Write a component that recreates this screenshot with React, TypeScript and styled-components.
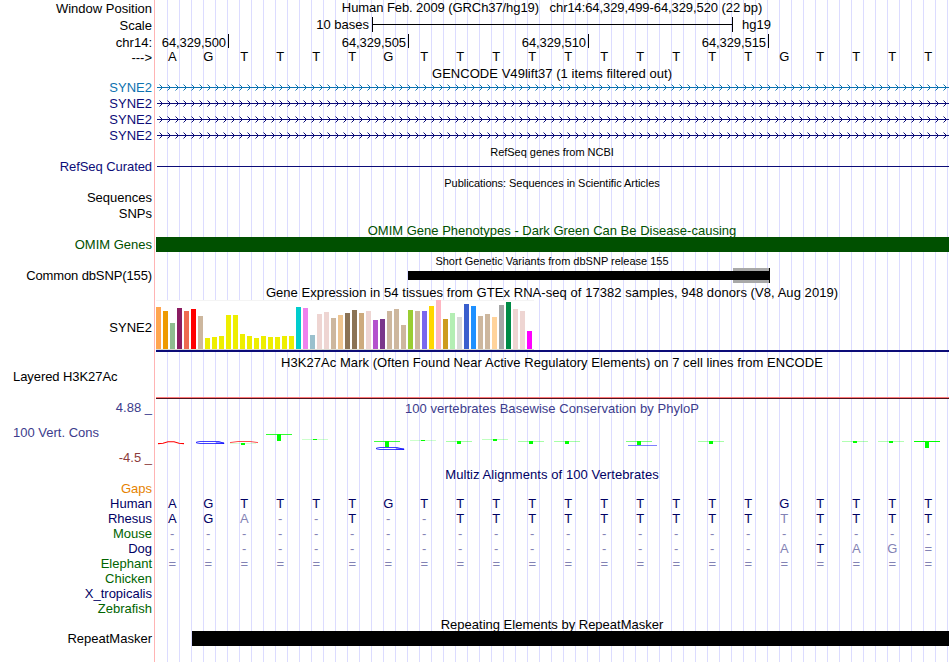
import styled, { createGlobalStyle } from 'styled-components';

const ink = {
  black: '#000000',
  navy: '#0c0c78',
  blue: '#0c72b0',
  green: '#005000',
  species: '#006400',
  align: '#000064',
  cons: '#3c3c8c',
  consLow: '#8c3c3c',
  gaps: '#e68200',
};

const HUMAN = 'AGTTTTGTTTTTTTTTTGTTTT';

// lower case marks a base that differs from the reference
const ALIGNMENTS: { name: string; tint: string; bases: string }[] = [
  { name: 'Gaps', tint: ink.gaps, bases: '' },
  { name: 'Human', tint: ink.align, bases: HUMAN },
  { name: 'Rhesus', tint: ink.align, bases: 'AGa--T--TTTTTTTTTtTTTT' },
  { name: 'Mouse', tint: ink.species, bases: '-'.repeat(22) },
  { name: 'Dog', tint: ink.align, bases: '-'.repeat(17) + 'aTag=' },
  { name: 'Elephant', tint: ink.species, bases: '='.repeat(22) },
  { name: 'Chicken', tint: ink.species, bases: '' },
  { name: 'X_tropicalis', tint: ink.align, bases: '' },
  { name: 'Zebrafish', tint: ink.species, bases: '' },
];

const GENES = [ink.blue, ink.navy, ink.navy, ink.navy];

const POSITIONS = ['64,329,500', '64,329,505', '64,329,510', '64,329,515'];

const TISSUES: [string, number][] = [
  ['#ffa54f', 42], ['#ee9a00', 38], ['#8fbc8f', 26], ['#8b1c62', 41], ['#ee6a50', 38], ['#ff0000', 40],
  ['#cdb79e', 33], ['#eeee00', 11], ['#eeee00', 12], ['#eeee00', 13], ['#eeee00', 34], ['#eeee00', 34],
  ['#eeee00', 15], ['#eeee00', 13], ['#eeee00', 11], ['#eeee00', 13], ['#eeee00', 12], ['#eeee00', 12],
  ['#eeee00', 13], ['#eeee00', 13], ['#00cdcd', 42], ['#ee82ee', 41], ['#9ac0cd', 14], ['#eed5d2', 35],
  ['#eed5d2', 37], ['#cdb79e', 31], ['#eec591', 34], ['#8b7355', 36], ['#8b7355', 39], ['#cdaa7d', 36],
  ['#eed5d2', 38], ['#b452cd', 29], ['#7a378b', 30], ['#cdb79e', 38], ['#cdb79e', 40], ['#cdb79e', 24],
  ['#9acd32', 39], ['#cdb79e', 38], ['#7a67ee', 38], ['#ffd700', 43], ['#ffb6c1', 49], ['#cd9b1d', 30],
  ['#b4eeb4', 36], ['#d9d9d9', 32], ['#3a5fcd', 45], ['#1e90ff', 43], ['#cdb79e', 33], ['#cdb79e', 35],
  ['#ffd39b', 32], ['#a6a6a6', 44], ['#008b45', 47], ['#eed5d2', 40], ['#eed5d2', 38], ['#ff00ff', 18],
];

/** flattened T glyphs: [base index, top, height, crossbar opacity] */
const T_MARKS: [number, number, number, number][] = [
  [2, 12, 2, 0.15], [3, 3, 7, 0.8], [4, 8, 1, 0.2], [6, 10, 6, 0.75], [7, 9, 1, 0.2], [8, 10, 3, 0.35],
  [9, 8, 2, 0.25], [10, 10, 3, 0.35], [11, 10, 3, 0.35], [13, 10, 4, 0.5], [15, 10, 3, 0.35],
  [19, 10, 2, 0.3], [20, 10, 2, 0.3], [21, 10, 7, 1],
];

function GeneLine({ tint }: { tint: string }) {
  return (
    <Drawing width="793" height="16" viewBox="0 0 793 16">
      <rect x="1" y="7" width="792" height="1" fill={tint} />
      {Array.from({ length: 99 }, (_, i) => (
        <path
          key={i}
          d={`M${3.5 + i * 8} 4.5l3 3l-3 3`}
          fill="none"
          stroke={tint}
          strokeWidth="1"
        />
      ))}
    </Drawing>
  );
}

function Conservation() {
  return (
    <Drawing width="793" height="24" viewBox="0 0 793 24">
      <path d="M2 12.6L7 12.2L12 10.8H18L23 12.2L28 12.6" fill="none" stroke="#ff0000" strokeWidth="1.1" />
      <path d="M68 12.4L63 10.5H44Q36 11.5 44 12.5H68V11.9H60" fill="none" stroke="#0000ff" strokeWidth="0.75" />
      <path d="M74 11.6L82 10.5H94L102 11.6" fill="none" stroke="#ff0000" strokeWidth="0.7" />
      <path d="M248 18.4L241 16.5H224Q216 17.5 224 18.5H248V17.9H240" fill="none" stroke="#0000ff" strokeWidth="0.75" />
      <rect x="472" y="14" width="29" height="1" fill="#0000ff" opacity="0.5" />
      {T_MARKS.map(([base, top, height, strength]) => (
        <g key={base} fill="#00ff00">
          <rect x={base * 36 + 2} y={top} width="26" height="1" opacity={strength} />
          <rect x={base * 36 + 13} y={top} width="4" height={height} />
        </g>
      ))}
    </Drawing>
  );
}

function Sequence({ bases, tint, faded }: { bases: string; tint: string; faded: string }) {
  return (
    <Bases>
      {bases.split('').map((b, i) => (
        <Base key={i} $tint={/[A-Z]/.test(b) ? tint : faded}>
          {b.toUpperCase()}
        </Base>
      ))}
    </Bases>
  );
}

export default function App() {
  return (
    <>
      <GlobalStyle />
      <Browser>
        <Row $h={17}>
          <Label $dy={1}>Window Position</Label>
          <Track>
            <Title $ls={-0.08}>{'Human Feb. 2009 (GRCh37/hg19)\u00a0\u00a0 chr14:64,329,499-64,329,520 (22 bp)'}</Title>
          </Track>
        </Row>
        <Row $h={17}>
          <Label $dy={1}>Scale</Label>
          <Track>
            <ScaleLine>
              <ScaleText $w={213}>10 bases</ScaleText>
              <ScaleBar />
              <ScaleText $w={38}>hg19</ScaleText>
            </ScaleLine>
          </Track>
        </Row>
        <Row $h={16}>
          <Label $dy={1}>chr14:</Label>
          <Track>
            <Ruler>
              {POSITIONS.map((p, i) => (
                <Position key={p} $w={i === 0 ? 73 : 180}>
                  {p}
                </Position>
              ))}
            </Ruler>
          </Track>
        </Row>
        <Row $h={16}>
          <Label>{'--->'}</Label>
          <Track $dy={-1}>
            <Sequence bases={HUMAN} tint={ink.black} faded={ink.black} />
          </Track>
        </Row>
        <Row $h={14}>
          <Label />
          <Track>
            <Title $ls={0.04}>GENCODE V49lift37 (1 items filtered out)</Title>
          </Track>
        </Row>
        {GENES.map((tint, i) => (
          <Row key={i} $h={16}>
            <Label $tint={tint}>SYNE2</Label>
            <Track>
              <GeneLine tint={tint} />
            </Track>
          </Row>
        ))}
        <Row $h={15}>
          <Label />
          <Track>
            <SmallTitle $ls={-0.03}>RefSeq genes from NCBI</SmallTitle>
          </Track>
        </Row>
        <Row $h={16}>
          <Label $tint={ink.navy} $ls={-0.07}>RefSeq Curated</Label>
          <Track>
            <Intron />
          </Track>
        </Row>
        <Row $h={15}>
          <Label />
          <Track>
            <SmallTitle $ls={-0.05}>Publications: Sequences in Scientific Articles</SmallTitle>
          </Track>
        </Row>
        <Row $h={16}>
          <Label>Sequences</Label>
          <Track />
        </Row>
        <Row $h={16}>
          <Label>SNPs</Label>
          <Track />
        </Row>
        <Row $h={15}>
          <Label />
          <Track>
            <Title $tint={ink.green} $dy={1}>OMIM Gene Phenotypes - Dark Green Can Be Disease-causing</Title>
          </Track>
        </Row>
        <Row $h={16}>
          <Label $tint={ink.green}>OMIM Genes</Label>
          <Track>
            <Block $tint={ink.green} $start={0} />
          </Track>
        </Row>
        <Row $h={15}>
          <Label />
          <Track>
            <SmallTitle>Short Genetic Variants from dbSNP release 155</SmallTitle>
          </Track>
        </Row>
        <Row $h={17}>
          <Label $ls={-0.12}>Common dbSNP(155)</Label>
          <Track>
            <Variant>
              <VariantBody />
              <VariantEnd />
            </Variant>
          </Track>
        </Row>
        <Row $h={15}>
          <Label />
          <Track>
            <Title $ls={0.055}>Gene Expression in 54 tissues from GTEx RNA-seq of 17382 samples, 948 donors (V8, Aug 2019)</Title>
          </Track>
        </Row>
        <Row $h={55}>
          <Label $dy={20}>SYNE2</Label>
          <Track>
            <Expression>
              {TISSUES.map(([tint, level], i) => (
                <TissueBar key={i} $tint={tint} style={{ height: level }} />
              ))}
            </Expression>
            <GeneModel />
          </Track>
        </Row>
        <Row $h={14}>
          <Label />
          <Track>
            <Title $ls={0.05}>H3K27Ac Mark (Often Found Near Active Regulatory Elements) on 7 cell lines from ENCODE</Title>
          </Track>
        </Row>
        <Row $h={28}>
          <Label $left $ls={-0.07}>Layered H3K27Ac</Label>
          <Track />
        </Row>
        <Row $h={3}>
          <Label />
          <Track>
            <Signal />
          </Track>
        </Row>
        <Row $h={25}>
          <Label $tint={ink.cons}>4.88 _</Label>
          <Track>
            <Title $tint={ink.cons} $dy={1} $ls={0.04}>100 vertebrates Basewise Conservation by PhyloP</Title>
          </Track>
        </Row>
        <Row $h={6}>
          <Label $tint={ink.cons} $left>100 Vert. Cons</Label>
          <Track />
        </Row>
        <Row $h={19}>
          <Label />
          <Track>
            <Conservation />
          </Track>
        </Row>
        <Row $h={17}>
          <Label $tint={ink.consLow}>-4.5 _</Label>
          <Track />
        </Row>
        <Row $h={14}>
          <Label />
          <Track>
            <Title $tint={ink.align} $ls={0.07}>Multiz Alignments of 100 Vertebrates</Title>
          </Track>
        </Row>
        {ALIGNMENTS.map((a) => (
          <Row key={a.name} $h={15}>
            <Label $tint={a.tint}>{a.name}</Label>
            <Track>
              <Sequence bases={a.bases} tint={ink.align} faded="#8282b4" />
            </Track>
          </Row>
        ))}
        <Row $h={15}>
          <Label />
          <Track>
            <Title $dy={1}>Repeating Elements by RepeatMasker</Title>
          </Track>
        </Row>
        <Row $h={31}>
          <Label>RepeatMasker</Label>
          <Track>
            <Block $tint={ink.black} $start={36} />
          </Track>
        </Row>
      </Browser>
    </>
  );
}

/* ---- styled ---- */

const GlobalStyle = createGlobalStyle`
  body {
    margin: 0;
    background: #ffffff;
  }
`;

const Browser = styled.div`
  width: 949px;
  height: 662px;
  overflow: hidden;
  font-family: 'Liberation Sans', Arial, sans-serif;
  font-size: 13px;
  line-height: 16px;
  white-space: nowrap;
  background:
    linear-gradient(#ffb4b4, #ffb4b4) 154px 0 / 1px 100% no-repeat,
    repeating-linear-gradient(90deg, transparent 0 11px, #dcdcff 11px 12px) 156px 0 / 793px 100% no-repeat;
`;

const Row = styled.div<{ $h: number }>`
  display: flex;
  align-items: flex-start;
  height: ${(p) => p.$h}px;
`;

const Label = styled.div<{ $tint?: string; $dy?: number; $ls?: number; $left?: boolean }>`
  box-sizing: border-box;
  flex: 0 0 156px;
  padding: ${(p) => (p.$left ? '0 0 0 13px' : '0 4px 0 0')};
  margin-top: ${(p) => p.$dy ?? 0}px;
  letter-spacing: ${(p) => p.$ls ?? 0}px;
  text-align: ${(p) => (p.$left ? 'left' : 'right')};
  color: ${(p) => p.$tint ?? ink.black};
`;

const Track = styled.div<{ $dy?: number }>`
  flex: 0 0 793px;
  margin-top: ${(p) => p.$dy ?? 0}px;
`;

const Title = styled.div<{ $tint?: string; $dy?: number; $ls?: number }>`
  padding: ${(p) => p.$dy ?? 0}px 1px 0 0;
  letter-spacing: ${(p) => p.$ls ?? 0}px;
  text-align: center;
  color: ${(p) => p.$tint ?? ink.black};
`;

const SmallTitle = styled(Title)`
  font-size: 11px;
`;

const Drawing = styled.svg`
  display: block;
`;

const ScaleLine = styled.div`
  display: flex;
`;

const ScaleText = styled.span<{ $w: number }>`
  width: ${(p) => p.$w}px;
  margin-right: 3px;
  text-align: right;
`;

const ScaleBar = styled.div`
  box-sizing: border-box;
  width: 361px;
  height: 15px;
  border: solid ${ink.black};
  border-width: 0 1px;
  background: linear-gradient(${ink.black}, ${ink.black}) 0 7px / 100% 1px no-repeat;
`;

const Ruler = styled.div`
  display: flex;
`;

const Position = styled.span<{ $w: number }>`
  box-sizing: border-box;
  width: ${(p) => p.$w}px;
  height: 14px;
  padding-right: 2px;
  border-right: 1px solid ${ink.black};
  line-height: 18px;
  letter-spacing: -0.08px;
  text-align: right;
`;

const Bases = styled.div`
  display: grid;
  grid-template-columns: repeat(22, 36px);
`;

const Base = styled.span<{ $tint: string }>`
  padding-right: 3.5px;
  text-align: center;
  color: ${(p) => p.$tint};
`;

const Intron = styled.div`
  height: 1px;
  margin: 7px 0 0 1px;
  background: ${ink.navy};
`;

const Block = styled.div<{ $tint: string; $start: number }>`
  height: 15px;
  margin-left: ${(p) => p.$start}px;
  background: ${(p) => p.$tint};
`;

const Variant = styled.div`
  display: flex;
  align-items: center;
  height: 15px;
  padding-left: 252px;
`;

const VariantBody = styled.div`
  width: 325px;
  height: 9px;
  background: ${ink.black};
`;

const VariantEnd = styled.div`
  width: 36px;
  height: 15px;
  border-right: 1px solid ${ink.black};
  background: linear-gradient(#a8a8a8 3px, ${ink.black} 3px 12px, #a8a8a8 12px);
`;

const Expression = styled.div`
  display: flex;
  align-items: flex-end;
  gap: 2px;
  box-sizing: border-box;
  width: 378px;
  height: 50px;
  border-bottom: 1px solid #d8d8d0;
  background: linear-gradient(#f4f4f4, #f4f4f4) 0 0 / 100% 1px no-repeat, #ffffff;
`;

const TissueBar = styled.div<{ $tint: string }>`
  width: 5px;
  background: ${(p) => p.$tint};
`;

const GeneModel = styled.div`
  height: 2px;
  background: ${ink.navy};
`;

const Signal = styled.div`
  height: 1px;
  border-bottom: 1px solid #50141e;
  background: #ff7878;
`;
